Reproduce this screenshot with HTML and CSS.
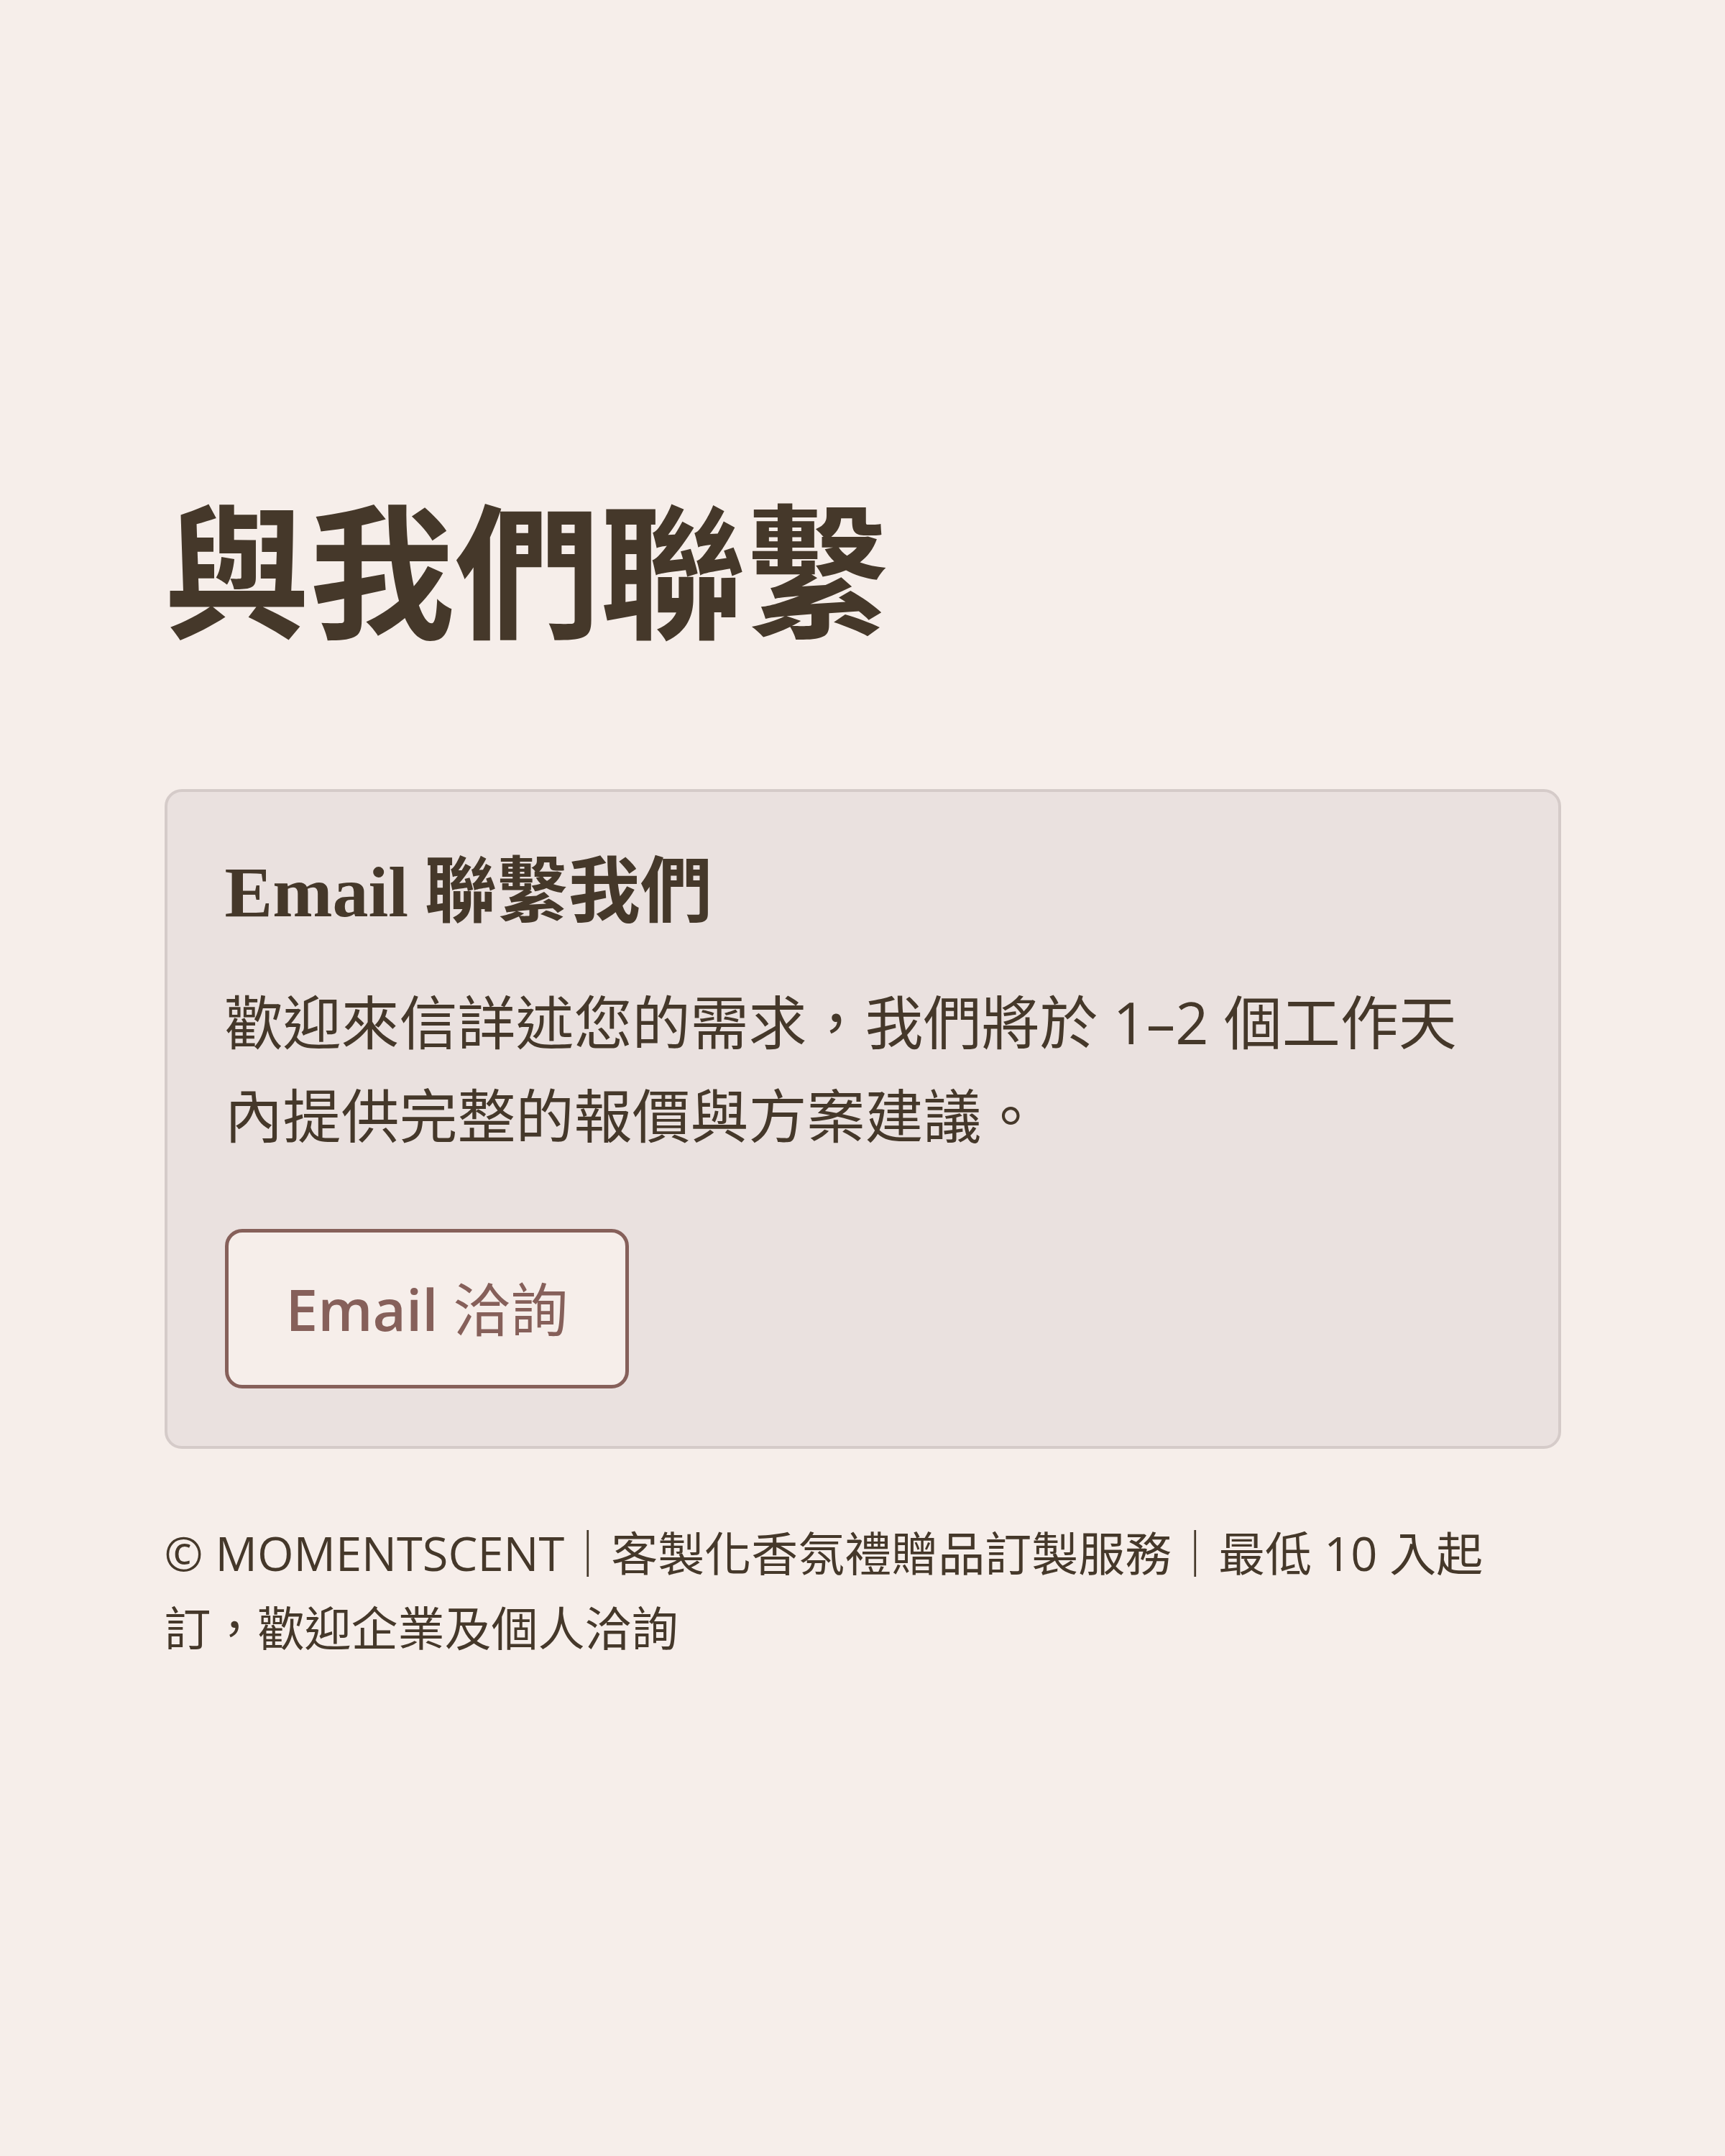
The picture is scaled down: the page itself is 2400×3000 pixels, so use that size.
FILE: index.html
```html
<!DOCTYPE html>
<html lang="zh-Hant">
<head>
<meta charset="utf-8">
<title>與我們聯繫</title>
<link rel="stylesheet" href="styles.css">
</head>
<body>
<main class="page">
  <h1 class="page-title">與我們聯繫</h1>
  <section class="contact-card">
    <h2 class="card-title"><span class="latin">Email</span> 聯繫我們</h2>
    <p class="card-text">歡迎來信詳述您的需求，我們將於 1–2 個工作天內提供完整的報價與方案建議。</p>
    <a class="btn-outline" href="#">Email <span class="cjk">洽詢</span></a>
  </section>
  <footer class="site-footer">© MOMENTSCENT｜客製化香氛禮贈品訂製服務｜最低 10 入起訂，歡迎企業及個人洽詢</footer>
</main>
</body>
</html>
```
FILE: styles.css
```css
* { box-sizing: border-box; }
html, body { margin: 0; padding: 0; }
body {
  background: #f6eeea;
  color: #45382a;
  font-family: "Open Sans", "Noto Sans CJK TC", sans-serif;
}
.page {
  width: 1943px;
  margin: 0 auto;
  padding-top: 664px;
  padding-bottom: 600px;
}
.page-title {
  margin: 0;
  font-family: "Noto Sans CJK TC", sans-serif;
  font-weight: 700;
  font-size: 202px;
  line-height: 1.2;
  color: #45382a;
}
.contact-card {
  margin-top: 192px;
  background: #eae1df;
  border: 4px solid #d5cbc9;
  border-radius: 24px;
  padding: 80px;
}
.card-title {
  margin: 0;
  font-family: "Noto Sans CJK TC", sans-serif;
  font-weight: 700;
  font-size: 100px;
  line-height: 1;
}
.card-title .latin {
  font-family: "Liberation Serif", serif;
  font-weight: 700;
}
.card-text {
  margin: 65px 0 0;
  font-size: 81px;
  line-height: 1.6;
}
.btn-outline {
  display: inline-block;
  margin-top: 93px;
  padding: 42px 80px;
  border: 5px solid #86605a;
  border-radius: 24px;
  background: #f6eeea;
  color: #86605a;
  font-size: 80px;
  font-weight: 600;
  line-height: 1.6;
  text-decoration: none;
}
.btn-outline .cjk {
  font-weight: 400;
}
.site-footer {
  margin-top: 93px;
  font-size: 65px;
  line-height: 1.6;
}
```
